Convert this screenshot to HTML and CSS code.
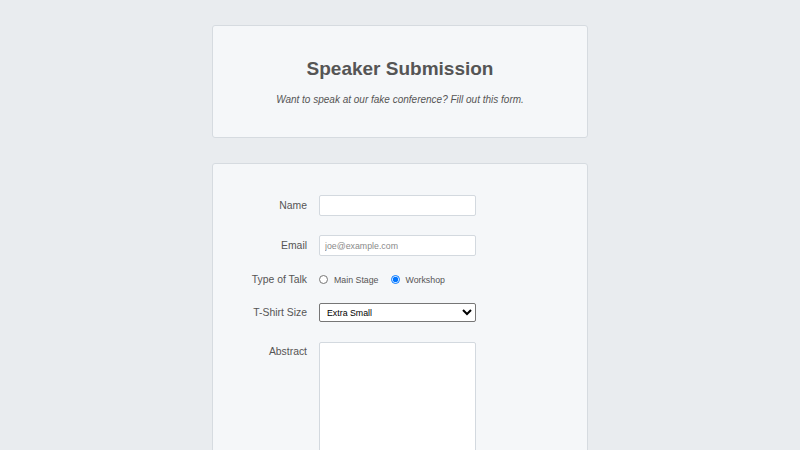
FILE: index.html
```html
<!DOCTYPE html>
<html>
<head>
<meta charset="utf-8">
<link rel="stylesheet" href="styles.css">
</head>
<body>
<div class="page">
  <header class="card intro">
    <h1 class="title">Speaker Submission</h1>
    <p class="subtitle">Want to speak at our fake conference? Fill out this form.</p>
  </header>
  <form class="card form">
    <div class="row">
      <label class="label" for="name">Name</label>
      <input class="field" id="name" type="text">
    </div>
    <div class="row email-row">
      <label class="label" for="email">Email</label>
      <input class="field" id="email" type="email" placeholder="joe@example.com">
    </div>
    <div class="row radio-row">
      <span class="label">Type of Talk</span>
      <div class="radios">
        <label class="radio"><input type="radio" name="talk"> Main Stage</label>
        <label class="radio"><input type="radio" name="talk" checked> Workshop</label>
      </div>
    </div>
    <div class="row">
      <label class="label" for="size">T-Shirt Size</label>
      <select class="select" id="size">
        <option>Extra Small</option>
        <option>Small</option>
        <option>Medium</option>
        <option>Large</option>
      </select>
    </div>
    <div class="row top">
      <label class="label abstract-label" for="abstract">Abstract</label>
      <textarea class="area" id="abstract"></textarea>
    </div>
  </form>
</div>
</body>
</html>
```

FILE: styles.css
```css
html, body {
  margin: 0;
  padding: 0;
  background: #e9ecef;
  font-family: "Liberation Sans", Arial, sans-serif;
  color: #555;
}
.page {
  width: 376px;
  margin: 0 auto;
  padding-top: 25px;
  display: flex;
  flex-direction: column;
  gap: 25px;
}
.card {
  background: #f5f7f9;
  border: 1px solid #d6dbe0;
  border-radius: 3px;
  box-sizing: border-box;
}
.intro {
  height: 113px;
  text-align: center;
  padding-top: 31px;
}
.title {
  margin: 0;
  font-size: 19px;
  font-weight: bold;
  line-height: 24px;
  color: #555;
}
.subtitle {
  margin: 13px 0 0;
  font-size: 10px;
  font-style: italic;
  line-height: 12px;
  color: #555;
}
.form {
  padding: 31px 0 40px;
  display: flex;
  flex-direction: column;
  gap: 17px;
  min-height: 320px;
}
.row {
  display: grid;
  grid-template-columns: 94px 157px;
  column-gap: 12px;
  align-items: center;
}
.email-row {
  margin-top: 2px;
}
.radio-row {
  height: 13px;
}
.row.top {
  align-items: start;
  margin-top: 3px;
}
.label {
  text-align: right;
  font-size: 10.4px;
  color: #555;
}
.abstract-label {
  padding-top: 4px;
}
.field {
  box-sizing: border-box;
  height: 21px;
  width: 157px;
  margin: 0;
  border: 1px solid #d3d9df;
  border-radius: 2px;
  background: #fff;
  font-family: "Liberation Sans", Arial, sans-serif;
  font-size: 8.8px;
  padding: 0 5px;
  color: #333;
}
.field::placeholder {
  color: #8a8a8a;
}
.radios {
  display: flex;
  gap: 12px;
  font-size: 8.8px;
  color: #555;
}
.radio {
  display: flex;
  align-items: center;
  gap: 4px;
}
.radio input {
  margin: 0 2px 0 0;
  width: 9px;
  height: 9px;
}
.select {
  box-sizing: border-box;
  width: 157px;
  height: 19px;
  margin: 0;
  font-family: "Liberation Sans", Arial, sans-serif;
  font-size: 8.8px;
  border: 1px solid #767676;
  border-radius: 2px;
  background: #fff;
  color: #000;
  padding: 0 3px;
}
.area {
  box-sizing: border-box;
  width: 157px;
  height: 150px;
  margin: 0;
  border: 1px solid #d3d9df;
  border-radius: 2px;
  background: #fff;
  resize: none;
}
```
